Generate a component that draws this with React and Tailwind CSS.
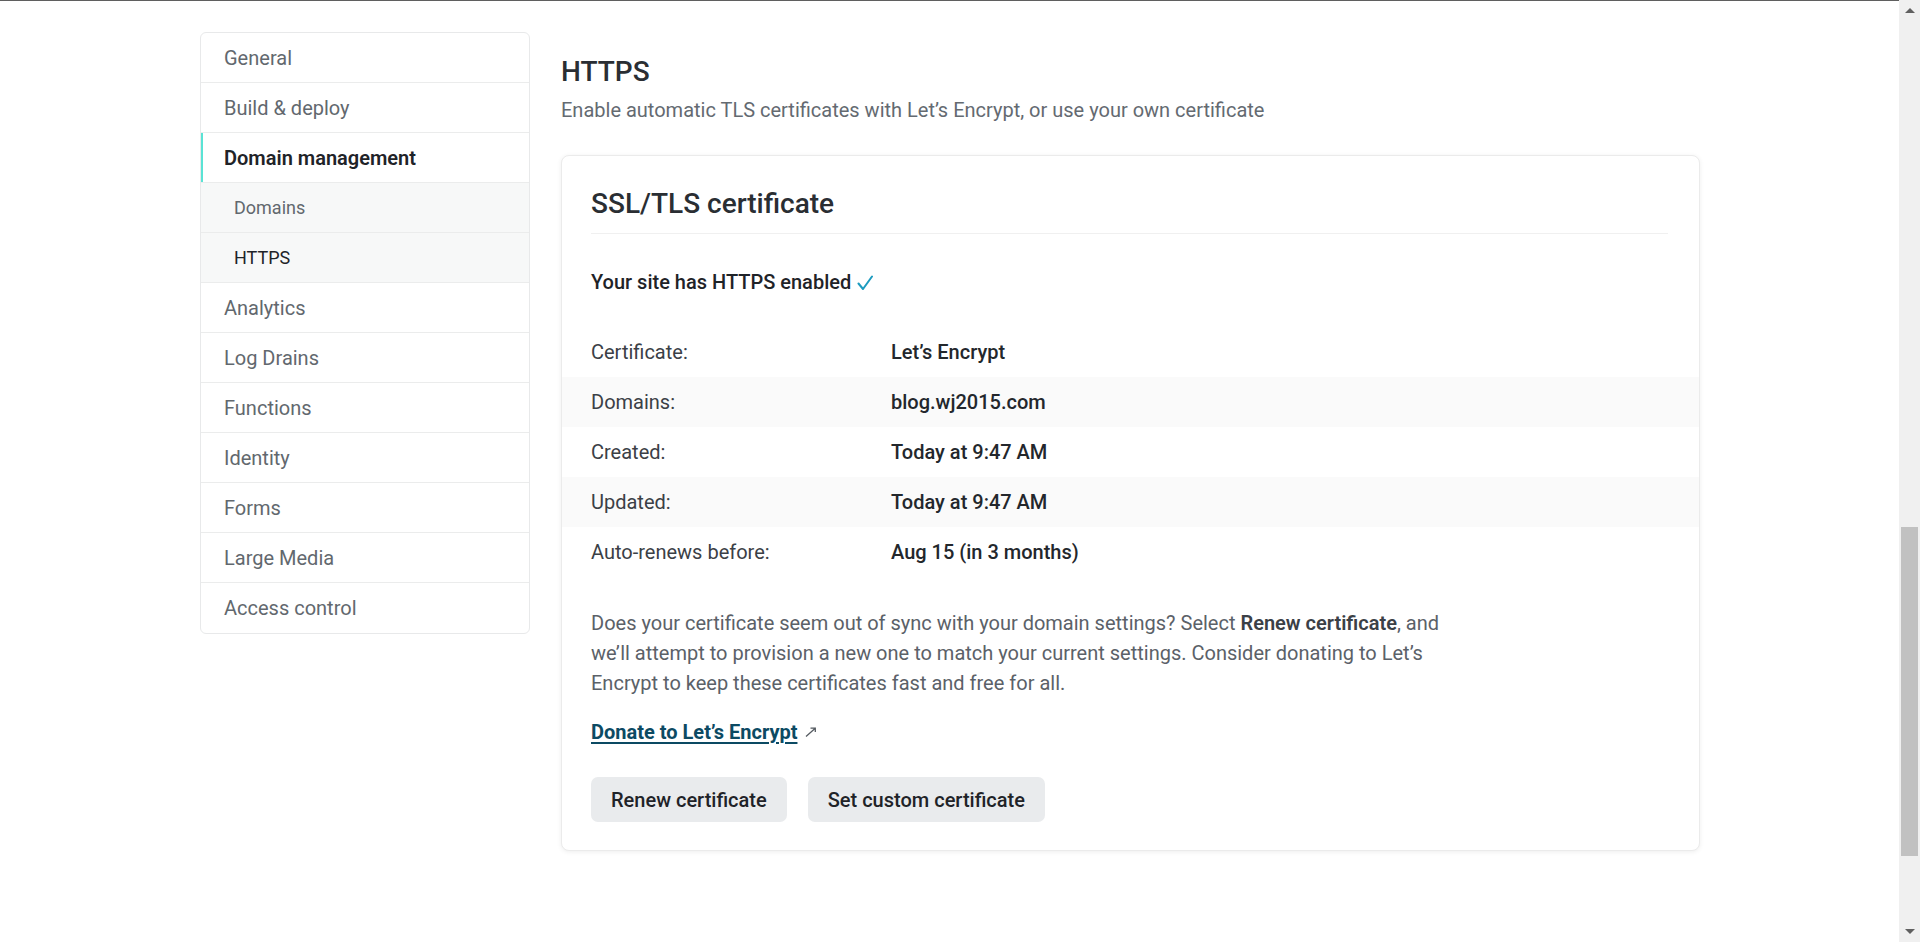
import { useState } from "react";

const navItems = [
  { label: "General" },
  { label: "Build & deploy" },
  { label: "Domain management", active: true },
  { label: "Domains", sub: true },
  { label: "HTTPS", sub: true, active: true },
  { label: "Analytics" },
  { label: "Log Drains" },
  { label: "Functions" },
  { label: "Identity" },
  { label: "Forms" },
  { label: "Large Media" },
  { label: "Access control" }
];

const certRows = [
  { label: "Certificate:", value: "Let’s Encrypt" },
  { label: "Domains:", value: "blog.wj2015.com", striped: true },
  { label: "Created:", value: "Today at 9:47 AM" },
  { label: "Updated:", value: "Today at 9:47 AM", striped: true },
  { label: "Auto-renews before:", value: "Aug 15 (in 3 months)" }
];

const SideNav = () => (
  <nav className="w-[330px] self-start overflow-hidden rounded-[6px] border border-[#e8e9ea] bg-white">
    {navItems.map((item, i) => {
      const last = i === navItems.length - 1;
      let cls = "flex h-[50px] items-center ";
      if (!last) cls += "border-b border-[#ebecec] ";
      if (item.sub) {
        cls += "bg-[#f7f8f8] pl-[33px] text-[18px] ";
        cls += item.active ? "text-[#1f2328]" : "text-[#62686e]";
      } else if (item.active) {
        cls += "pl-[23px] text-[20px] font-semibold text-[#1f2328] shadow-[inset_2px_0_0_#5ae3d5]";
      } else {
        cls += "pl-[23px] text-[20px] text-[#62686e]";
      }
      return (
        <a key={item.label} href="#" className={cls}>
          {item.label}
        </a>
      );
    })}
  </nav>
);

const CheckMark = () => (
  <svg width="16" height="15" viewBox="0 0 16 15" className="ml-[6px] inline-block">
    <path d="M1.5 8.5 L6 14 L15 1.5" fill="none" stroke="#1d9bbf" strokeWidth="2" strokeLinecap="round" strokeLinejoin="round" />
  </svg>
);

const ExternalArrow = () => (
  <svg width="12" height="10" viewBox="0 0 12 10" className="ml-[8px] inline-block">
    <path d="M1 9.5 L10 1.5 M5.5 1.2 L10.3 1.2 L10.3 5" fill="none" stroke="#555b61" strokeWidth="1.3" />
  </svg>
);

const CertificateCard = () => {
  const [renewing, setRenewing] = useState(false);

  return (
    <section className="mt-[31px] rounded-[8px] border border-[#ebebeb] bg-white pl-[29px] pr-[31px] pt-[31px] pb-[28px] shadow-[0_1px_5px_rgba(0,0,0,0.07)]">
      <h3 className="border-b border-[#f0f0f0] pb-[12px] text-[28px] font-medium leading-[34px] text-[#2a2e33]">
        SSL/TLS certificate
      </h3>

      <p className="mt-[34px] flex items-center text-[20px] font-medium leading-[28px] text-[#1f2328]">
        Your site has HTTPS enabled
        <CheckMark />
      </p>

      <dl className="-ml-[29px] -mr-[31px] mt-[31px]">
        {certRows.map((row) => (
          <div
            key={row.label}
            className={`flex h-[50px] items-center pl-[29px] text-[20px] ${row.striped ? "bg-[#fafafa]" : ""}`}
          >
            <dt className="w-[300px] text-[#3b4046]">{row.label}</dt>
            <dd className="font-medium text-[#23272c]">{row.value}</dd>
          </div>
        ))}
      </dl>

      <p className="mt-[31px] max-w-[860px] text-[20px] leading-[30px] text-[#5b6168]">
        Does your certificate seem out of sync with your domain settings? Select{" "}
        <strong className="font-semibold text-[#3b4046]">Renew certificate</strong>, and we’ll attempt to
        provision a new one to match your current settings. Consider donating to Let’s Encrypt to keep these
        certificates fast and free for all.
      </p>

      <p className="mt-[20px] flex items-center text-[20px] leading-[28px]">
        <a href="#" className="font-bold text-[#0c4a63] underline decoration-2 underline-offset-[3px]">
          Donate to Let’s Encrypt
        </a>
        <ExternalArrow />
      </p>

      <div className="mt-[31px] flex gap-[21px]">
        <button
          type="button"
          onClick={() => setRenewing(!renewing)}
          className="h-[45px] rounded-[7px] bg-[#e9ebed] px-[20px] text-[20px] font-medium text-[#1f2328]"
        >
          Renew certificate
        </button>
        <button
          type="button"
          className="h-[45px] rounded-[7px] bg-[#e9ebed] px-[20px] text-[20px] font-medium text-[#1f2328]"
        >
          Set custom certificate
        </button>
      </div>
    </section>
  );
};

const ScrollBar = () => (
  <div className="flex h-full w-[21px] flex-col items-center bg-[#f0f0f0]">
    <div className="flex h-[21px] items-center justify-center">
      <div className="h-0 w-0 border-x-[5px] border-b-[5px] border-x-transparent border-b-[#606060]" />
    </div>
    <div className="w-full flex-1 px-[2px] pt-[506px]">
      <div className="h-[329px] w-full bg-[#c1c1c1]" />
    </div>
    <div className="flex h-[21px] items-center justify-center">
      <div className="h-0 w-0 border-x-[5px] border-t-[5px] border-x-transparent border-t-[#606060]" />
    </div>
  </div>
);

const App = () => (
  <div className="flex h-[942px] w-full overflow-hidden bg-white font-['Roboto',sans-serif]">
    <main className="flex flex-1 gap-[31px] border-t border-[#5f5f5f] pl-[200px] pt-[31px]">
      <SideNav />
      <div className="w-[1139px]">
        <h2 className="mt-[23px] text-[28px] font-medium leading-[34px] text-[#2a2e33]">HTTPS</h2>
        <p className="mt-[7px] text-[20px] leading-[28px] text-[#646a71]">
          Enable automatic TLS certificates with Let’s Encrypt, or use your own certificate
        </p>
        <CertificateCard />
      </div>
    </main>
    <ScrollBar />
  </div>
);

export default App;
